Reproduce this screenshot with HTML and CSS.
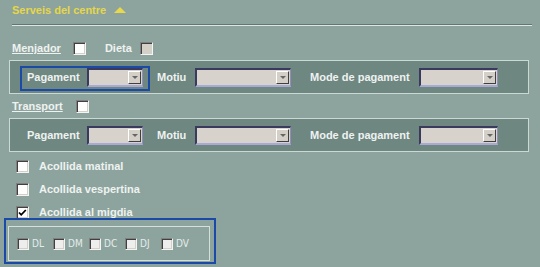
FILE: index.html
```html
<!DOCTYPE html>
<html>
<head>
<meta charset="utf-8">
<link rel="stylesheet" href="styles.css">
</head>
<body>
<div class="page">
  <div class="title">
    <span>Serveis del centre</span>
    <svg class="tri" width="12" height="6" viewBox="0 0 12 6"><polygon points="0,6 6,0 12,6" fill="#e8d84a"/></svg>
  </div>
  <div class="rule"></div>

  <div class="row row-menj">
    <span class="ulabel">Menjador</span>
    <span class="cb cb-menj"></span>
    <span class="label lbl-dieta">Dieta</span>
    <span class="cb cb-dis cb-dieta"></span>
  </div>

  <div class="panel">
    <div class="group hl">
      <span class="label w-pay">Pagament</span>
      <span class="sel w-s1"><span class="btn"></span></span>
    </div>
    <span class="label w-mot">Motiu</span>
    <span class="sel w-s2"><span class="btn"></span></span>
    <span class="label w-mode">Mode de pagament</span>
    <span class="sel w-s3"><span class="btn"></span></span>
  </div>

  <div class="row row-trans">
    <span class="ulabel">Transport</span>
    <span class="cb cb-trans"></span>
  </div>

  <div class="panel">
    <div class="group">
      <span class="label w-pay">Pagament</span>
      <span class="sel w-s1"><span class="btn"></span></span>
    </div>
    <span class="label w-mot">Motiu</span>
    <span class="sel w-s2"><span class="btn"></span></span>
    <span class="label w-mode">Mode de pagament</span>
    <span class="sel w-s3"><span class="btn"></span></span>
  </div>

  <div class="row row-ac row-first">
    <span class="cb"></span>
    <span class="label">Acollida matinal</span>
  </div>
  <div class="row row-ac">
    <span class="cb"></span>
    <span class="label">Acollida vespertina</span>
  </div>
  <div class="row row-ac">
    <span class="cb"><svg width="9" height="9" viewBox="0 0 9 9"><path d="M1 4.5 L3.2 6.8 L7.8 2" stroke="#000" stroke-width="1.8" fill="none"/></svg></span>
    <span class="label">Acollida al migdia</span>
  </div>

  <div class="days">
    <div class="day"><span class="cb cb-day"></span><span class="dlabel">DL</span></div>
    <div class="day"><span class="cb cb-day"></span><span class="dlabel">DM</span></div>
    <div class="day"><span class="cb cb-day"></span><span class="dlabel">DC</span></div>
    <div class="day"><span class="cb cb-day"></span><span class="dlabel">DJ</span></div>
    <div class="day"><span class="cb cb-day"></span><span class="dlabel">DV</span></div>
  </div>
</div>
</body>
</html>
```

FILE: styles.css
```css
html, body {
  margin: 0;
  padding: 0;
}
body {
  background: #8da49e;
  font-family: "Liberation Sans", Arial, sans-serif;
  font-size: 11px;
  font-weight: bold;
  color: #eef2f0;
  width: 540px;
  height: 267px;
  overflow: hidden;
}
.page {
  display: flex;
  flex-direction: column;
}
.title {
  display: flex;
  align-items: center;
  gap: 8px;
  height: 20px;
  line-height: 20px;
  padding-left: 12px;
  color: #e6d64a;
}
.tri {
  display: block;
}
.rule {
  margin: 4px 8px 0 12px;
  border-top: 1px solid #62786f;
  border-bottom: 1px solid #dce6e2;
}
.row {
  display: flex;
  align-items: center;
  height: 20px;
  line-height: 20px;
}
.row-menj {
  margin-top: 12px;
  padding-left: 12px;
}
.row-trans {
  margin-top: 2px;
  padding-left: 12px;
}
.ulabel {
  text-decoration: underline;
}
.cb {
  box-sizing: border-box;
  width: 13px;
  height: 13px;
  background: #fff;
  border-top: 1px solid #808080;
  border-left: 1px solid #808080;
  border-right: 1px solid #f4f4f4;
  border-bottom: 1px solid #f4f4f4;
  box-shadow: inset 1px 1px 0 #404040, inset -1px -1px 0 #d4d0c8;
  display: flex;
  align-items: center;
  justify-content: center;
  flex: none;
}
.cb svg { display: block; }
.cb-dis {
  background: #d4d0c8;
}
.cb-menj { margin-left: 12px; }
.lbl-dieta { margin-left: 19px; }
.cb-dieta { margin-left: 8px; }
.cb-trans { margin-left: 13px; }

.panel {
  box-sizing: border-box;
  height: 34px;
  margin: 2px 11px 0 9px;
  border: 1px solid #cbd8d4;
  background: #6e8781;
  display: flex;
  align-items: center;
  padding-left: 17px;
}
.group {
  display: flex;
  align-items: center;
  position: relative;
  margin-right: 14px;
}
.hl::before {
  content: "";
  position: absolute;
  left: -7px;
  right: -7px;
  top: -2px;
  bottom: -4px;
  border: 2px solid #1b4aa6;
}
.w-pay { width: 60px; }
.w-mot { width: 38px; }
.w-mode { width: 109px; }
.sel {
  box-sizing: border-box;
  height: 19px;
  background: #d7d3cc;
  border-top: 2px solid #3a3a5e;
  border-left: 2px solid #3a3a5e;
  border-bottom: 2px solid #a9a9d6;
  border-right: 1px solid #8f8fb8;
  display: flex;
  align-items: center;
  justify-content: flex-end;
  padding-right: 1px;
}
.w-s1 { width: 56px; }
.w-s2 { width: 96px; margin-right: 19px; }
.w-s3 { width: 79px; }
.btn {
  box-sizing: border-box;
  width: 13px;
  height: 13px;
  background: #d4d0c8;
  border-top: 1px solid #fff;
  border-left: 1px solid #fff;
  border-right: 1px solid #404040;
  border-bottom: 1px solid #404040;
  display: flex;
  align-items: center;
  justify-content: center;
}
.btn::after {
  content: "";
  width: 0;
  height: 0;
  border-left: 3px solid transparent;
  border-right: 3px solid transparent;
  border-top: 3px solid #666;
}
.row-ac {
  padding-left: 16px;
  gap: 10px;
  margin-top: 3px;
}
.row-first {
  margin-top: 4px;
}
.days {
  position: relative;
  box-sizing: border-box;
  width: 202px;
  height: 35px;
  margin: 4px 0 0 8px;
  border: 1px solid #d6dfdc;
  display: flex;
  align-items: center;
  padding-left: 8px;
}
.days::before {
  content: "";
  position: absolute;
  left: -5px;
  right: -7px;
  top: -9px;
  bottom: -4px;
  border: 2px solid #1b4aa6;
}
.day {
  display: flex;
  align-items: center;
  gap: 3px;
  width: 36px;
}
.cb-day {
  width: 12px;
  height: 12px;
  background: #eeeeee;
}
.dlabel {
  font-family: "Liberation Sans Narrow", "DejaVu Sans Condensed", "Liberation Sans", sans-serif;
  font-weight: normal;
  font-size: 10px;
  color: #e6ecea;
}
```
